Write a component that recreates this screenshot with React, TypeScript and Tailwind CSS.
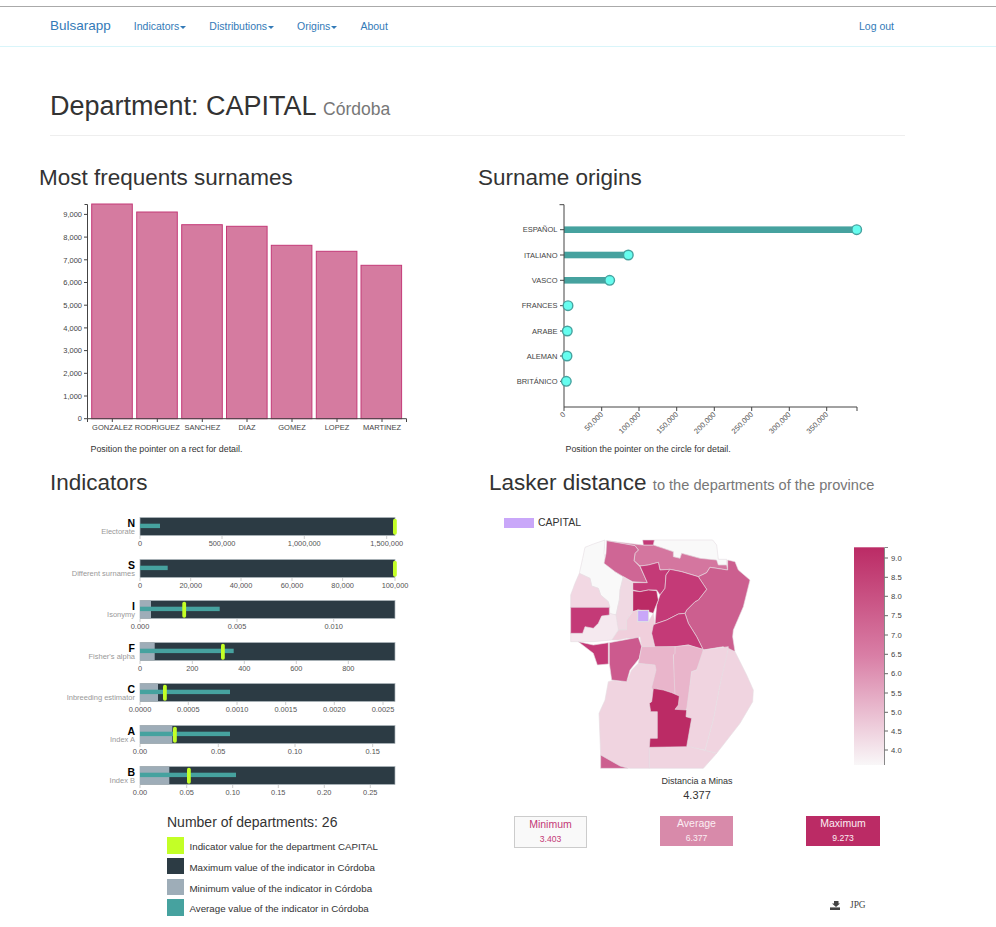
import type { ReactNode } from 'react';

const SANS = 'Liberation Sans, Arial, sans-serif';

const surnames = [
  { name: 'GONZALEZ', x: 91.7, top: 204, tick: 112.3 },
  { name: 'RODRIGUEZ', x: 136.7, top: 212, tick: 157.3 },
  { name: 'SANCHEZ', x: 181.7, top: 224.7, tick: 202.3 },
  { name: 'DIAZ', x: 226.5, top: 226.3, tick: 247 },
  { name: 'GOMEZ', x: 271.3, top: 245.3, tick: 292 },
  { name: 'LOPEZ', x: 316.3, top: 251.3, tick: 337 },
  { name: 'MARTINEZ', x: 361, top: 265.3, tick: 382 },
];

const origins = [
  { name: 'ESPAÑOL', y: 229.7, x: 856.7 },
  { name: 'ITALIANO', y: 255, x: 628.3 },
  { name: 'VASCO', y: 280.3, x: 609.7 },
  { name: 'FRANCES', y: 305.7, x: 568 },
  { name: 'ARABE', y: 331, x: 567.3 },
  { name: 'ALEMAN', y: 356, x: 567 },
  { name: 'BRITÁNICO', y: 381.3, x: 566.3 },
];

const originTicks = [
  { label: '0', x: 564 },
  { label: '50,000', x: 601.7 },
  { label: '100,000', x: 639 },
  { label: '150,000', x: 676.7 },
  { label: '200,000', x: 714.3 },
  { label: '250,000', x: 751.7 },
  { label: '300,000', x: 789.3 },
  { label: '350,000', x: 826.7 },
];

const bullets = [
  {
    letter: 'N', label: 'Electorate', min: 140, avg: 160, value: 395,
    ticks: [['0', 140], ['500,000', 222], ['1,000,000', 304.3], ['1,500,000', 386.7]],
  },
  {
    letter: 'S', label: 'Different surnames', min: 140, avg: 167.7, value: 395,
    ticks: [['0', 140], ['20,000', 190.7], ['40,000', 241], ['60,000', 292], ['80,000', 342.6], ['100,000', 395]],
  },
  {
    letter: 'I', label: 'Isonymy', min: 151, avg: 219.7, value: 184.3,
    ticks: [['0.000', 140], ['0.005', 237], ['0.010', 333.7]],
  },
  {
    letter: 'F', label: "Fisher's alpha", min: 154.7, avg: 233.7, value: 223,
    ticks: [['0', 140], ['200', 192.3], ['400', 244.3], ['600', 296.3], ['800', 348.3]],
  },
  {
    letter: 'C', label: 'Inbreeding estimator', min: 158, avg: 230, value: 165,
    ticks: [['0.0000', 140], ['0.0005', 188.3], ['0.0010', 237], ['0.0015', 285.7], ['0.0020', 334.3], ['0.0025', 383]],
  },
  {
    letter: 'A', label: 'Index A', min: 172.3, avg: 230, value: 175,
    ticks: [['0.00', 140], ['0.05', 218.3], ['0.10', 295], ['0.15', 372.7]],
  },
  {
    letter: 'B', label: 'Index B', min: 169.3, avg: 236, value: 189,
    ticks: [['0.00', 140], ['0.05', 186.7], ['0.10', 232.7], ['0.15', 278.3], ['0.20', 324.3], ['0.25', 370.3]],
  },
] as const;

const legendItems = [
  { color: 'bg-[#c3ff26]', text: 'Indicator value for the department CAPITAL' },
  { color: 'bg-[#2c3b44]', text: 'Maximum value of the indicator in Córdoba' },
  { color: 'bg-[#9eadb8]', text: 'Minimum value of the indicator in Córdoba' },
  { color: 'bg-[#46a29f]', text: 'Average value of the indicator in Córdoba' },
];

// map shapes, traced in the coordinates of a 3x crop, scaled down by the viewBox
const mapShapes = [
  { fill: '#f9f9f9', points: '135,30 100,42 75,52 68,85 58,130 90,145 95,168 115,175 122,195 145,215 150,255 168,255 178,210 180,180 190,140 165,125 140,100 132,70' },
  { fill: '#f9f9f9', points: '283,30 458,30 470,45 475,88 500,88 500,105 475,105 420,85 365,70 360,85 340,80 340,65 310,55 280,45' },
  { fill: '#d4769f', points: '140,32 248,45 280,45 310,55 340,65 340,80 360,85 365,70 420,85 470,90 475,105 500,105 503,120 470,115 450,112 440,128 415,140 365,125 330,118 300,120 295,97 265,105 240,108 222,92 225,70 235,60 225,47' },
  { fill: '#cf6695', points: '140,32 225,47 235,60 225,70 222,92 240,110 262,158 218,155 190,140 165,125 132,100 138,70' },
  { fill: '#c43a77', points: '248,30 283,30 280,45 250,45' },
  { fill: '#cc5f8f', points: '503,90 525,95 535,120 570,150 550,230 520,300 518,320 525,365 500,360 490,350 460,355 430,360 410,320 385,280 375,250 380,240 405,215 415,210 440,178 420,148 415,140 440,128 450,112 470,115 503,120' },
  { fill: '#c43a77', points: '240,108 265,105 295,97 300,120 330,118 318,135 315,175 300,195 290,180 265,180 240,185 218,180 218,158 262,158' },
  { fill: '#c43a77', points: '330,118 365,125 415,140 420,148 440,178 415,210 405,215 380,240 375,250 355,252 320,270 285,282 290,225 300,195 315,175 318,135' },
  { fill: '#bb2b65', points: '218,182 240,185 265,180 290,182 295,210 285,235 280,250 265,245 235,240 218,245' },
  { fill: '#f0d9e3', points: '190,140 218,158 218,245 200,270 200,300 175,300 160,255 168,255 178,210 180,180' },
  { fill: '#f0cfdc', points: '200,270 218,245 235,240 235,275 265,275 280,250 285,282 275,310 285,352 245,352 240,320 220,325 200,325 175,330 155,330 175,300 200,300' },
  { fill: '#c43a77', points: '285,282 320,270 355,252 375,250 385,280 410,320 430,360 385,345 350,350 285,352 275,310 280,285' },
  { fill: '#f2d8e3', points: '58,130 90,145 95,168 115,175 122,195 145,215 150,232 32,232 32,195 45,160' },
  { fill: '#f5e9ef', points: '32,305 68,305 75,285 100,290 115,275 125,253 150,250 168,255 175,300 155,330 100,335 55,335 32,335' },
  { fill: '#c43a77', points: '32,232 148,232 148,255 125,258 115,280 100,295 75,290 68,310 32,310' },
  { fill: '#c43a77', points: '55,335 100,345 145,338 145,402 112,405 100,370' },
  { fill: '#f0d4e0', points: '155,452 200,455 215,420 235,400 295,405 295,480 295,545 295,628 268,653 268,715 210,715 180,710 122,675 117,550 135,510 145,455' },
  { fill: '#cc5a8e', points: '148,338 235,322 245,350 238,385 210,420 200,455 155,450 148,400' },
  { fill: '#e9b5cb', points: '345,350 385,345 430,358 430,390 410,420 395,425 385,530 375,545 340,540 340,375' },
  { fill: '#e9b5cb', points: '245,350 315,350 345,350 345,370 340,375 345,500 310,490 280,490 275,472 288,420 285,405 235,400' },
  { fill: '#f0d4e0', points: '410,420 430,360 505,350 500,390 480,465 460,570 435,660 380,650 395,565 378,560 380,538 395,425' },
  { fill: '#f0d4e0', points: '505,355 525,365 560,435 580,480 578,515 540,580 470,670 435,662 460,570 480,465' },
  { fill: '#f0d4e0', points: '268,650 380,648 470,670 430,715 268,715' },
  { fill: '#bb2b65', points: '280,475 310,480 335,488 358,498 355,525 345,538 380,540 378,560 395,565 380,650 268,652 270,625 292,625 292,545 272,545 268,520 275,515' },
  { fill: '#cc5f8f', points: '122,675 180,708 205,715 122,715' },
];

const scaleTicks = [
  ['9.0', 558], ['8.5', 577.3], ['8.0', 596.3], ['7.5', 615.7], ['7.0', 635], ['6.5', 654.3],
  ['6.0', 673.7], ['5.5', 693], ['5.0', 712.3], ['4.5', 731], ['4.0', 750],
] as const;

function NavLink({ children, caret }: { children: ReactNode; caret?: boolean }) {
  return (
    <a className="flex items-center text-[10.5px] text-[#337ab7]">
      {children}
      {caret && <span className="ml-px mt-px h-0 w-0 border-x-[3px] border-t-[3px] border-x-transparent border-t-[#337ab7]" />}
    </a>
  );
}

function SurnamesChart() {
  const yTicks = [9000, 8000, 7000, 6000, 5000, 4000, 3000, 2000, 1000, 0];
  return (
    <svg viewBox="39 200 400 235" className="block h-[235px] w-[400px]">
      {surnames.map((s) => (
        <rect key={s.name} x={s.x} y={s.top} width={40.6} height={418.7 - s.top} fill="#d57ba0" stroke="#c43a77" strokeWidth={1} />
      ))}
      <path d="M84.5 204.5H87.5V418.7H406.5V422" fill="none" stroke="#444" strokeWidth={1} />
      <path d="M87.5 418.7V422" stroke="#444" strokeWidth={1} />
      {yTicks.map((t) => {
        const y = 418.7 - (t / 1000) * 22.7;
        return (
          <g key={t}>
            <line x1={84} x2={87.5} y1={y} y2={y} stroke="#444" />
            <text x={82} y={y + 2.7} textAnchor="end" fontSize={7.5} fill="#444">{t.toLocaleString('en-US')}</text>
          </g>
        );
      })}
      {surnames.map((s) => (
        <g key={s.name}>
          <line x1={s.tick} x2={s.tick} y1={418.7} y2={422} stroke="#444" />
          <text x={s.tick} y={429.7} textAnchor="middle" fontSize={7.5} fill="#444">{s.name}</text>
        </g>
      ))}
    </svg>
  );
}

function OriginsChart() {
  return (
    <svg viewBox="478 200 400 235" className="block h-[235px] w-[400px]">
      {origins.map((o) => (
        <rect key={o.name} x={564} y={o.y - 3.3} width={o.x - 564} height={6.6} fill="#46a29f" />
      ))}
      <path d="M559.5 204.7H564V407H857V411" fill="none" stroke="#444" strokeWidth={1} />
      {origins.map((o) => (
        <g key={o.name}>
          <line x1={560} x2={564} y1={o.y} y2={o.y} stroke="#444" />
          <text x={557.5} y={o.y + 2.7} textAnchor="end" fontSize={7.5} fill="#444">{o.name}</text>
          <circle cx={o.x} cy={o.y} r={4.8} fill="#66fdef" stroke="#46a29f" strokeWidth={1.4} />
        </g>
      ))}
      {originTicks.map((t) => (
        <g key={t.label}>
          <line x1={t.x} x2={t.x} y1={407} y2={411} stroke="#444" />
          <text transform={`translate(${t.x + 2} 415) rotate(-45)`} textAnchor="end" fontSize={7.5} fill="#555">{t.label}</text>
        </g>
      ))}
    </svg>
  );
}

function Bullet({ row }: { row: (typeof bullets)[number] }) {
  return (
    <svg viewBox="60 0 350 31" className="block h-[31px] w-[350px]">
      <rect x={140} y={0.5} width={255} height={18} fill="#2c3b44" stroke="#aeb8bd" strokeWidth={0.7} />
      {row.min > 140 && <rect x={140} y={0.8} width={row.min - 140} height={17.4} fill="#9eadb8" />}
      <rect x={140} y={6.7} width={row.avg - 140} height={4.4} fill="#46a29f" />
      <rect x={row.value - 2} y={1.7} width={3.8} height={16} rx={1.8} fill="#c3ff26" />
      <text x={135} y={9.8} textAnchor="end" fontSize={10.5} fontWeight={700} fill="#000">{row.letter}</text>
      <text x={135} y={17} textAnchor="end" fontSize={7.5} fill="#999">{row.label}</text>
      {row.ticks.map(([label, x]) => (
        <g key={label}>
          <line x1={x} x2={x} y1={19} y2={22} stroke="#ccc" />
          <text x={x} y={29.2} textAnchor="middle" fontSize={7.4} fill="#555">{label}</text>
        </g>
      ))}
    </svg>
  );
}

function DepartmentMap() {
  return (
    <svg viewBox="0 0 630 720" className="block h-[240px] w-[210px]">
      {mapShapes.map((s) => (
        <polygon key={s.points} points={s.points} fill={s.fill} stroke="#e6dde2" strokeWidth={1.8} strokeLinejoin="round" />
      ))}
      <rect x={233} y={241} width={33} height={34} fill="#c9a7f9" stroke="#e2e2e2" strokeWidth={3} />
    </svg>
  );
}

function ColorScale() {
  return (
    <svg viewBox="850 540 56 230" className="block h-[230px] w-[56px]">
      <defs>
        <linearGradient id="lasker" x1="0" x2="0" y1="0" y2="1">
          <stop offset="0" stopColor="#bb2b65" />
          <stop offset="0.5" stopColor="#d97fa6" />
          <stop offset="1" stopColor="#f9f7f8" />
        </linearGradient>
      </defs>
      <rect x={854} y={547.3} width={30.3} height={217.7} fill="url(#lasker)" />
      <path d="M888 547.5H884.5V765" fill="none" stroke="#888" strokeWidth={1} />
      {scaleTicks.map(([label, y]) => (
        <g key={label}>
          <line x1={884.5} x2={888} y1={y} y2={y} stroke="#666" />
          <text x={891} y={y + 2.7} fontSize={7.7} fill="#444">{label}</text>
        </g>
      ))}
    </svg>
  );
}

function Stat({ label, value, className }: { label: string; value: string; className: string }) {
  return (
    <div className={`flex flex-col items-center ${className}`}>
      <span className="text-[10.5px] leading-[15px]">{label}</span>
      <span className="text-[8.6px] leading-[15px]">{value}</span>
    </div>
  );
}

export default function App() {
  return (
    <div className="w-[996px] bg-white pt-[6px] text-[#333]" style={{ fontFamily: SANS }}>
      <nav className="flex h-[41px] items-center justify-between border-y border-t-[#aaaaaa] border-b-[#d9f5fa] pl-[50px] pr-[102px]">
        <div className="flex items-center gap-[23px]">
          <a className="text-[13.5px] text-[#337ab7]">Bulsarapp</a>
          <NavLink caret>Indicators</NavLink>
          <NavLink caret>Distributions</NavLink>
          <NavLink caret>Origins</NavLink>
          <NavLink>About</NavLink>
        </div>
        <NavLink>Log out</NavLink>
      </nav>

      <header className="ml-[50px] mt-[42px] h-[47px] w-[855px] border-b border-[#eeeeee]">
        <h1 className="text-[27px] leading-[34px]">
          Department: CAPITAL <small className="text-[17.5px] text-[#777777]">Córdoba</small>
        </h1>
      </header>

      <section className="mt-[28px] grid grid-cols-[439px_1fr] pl-[39px]">
        <div>
          <h2 className="h-[27px] text-[22.5px] leading-[27px]">Most frequents surnames</h2>
          <div className="mt-[9px]">
            <SurnamesChart />
          </div>
          <p className="mt-[9px] pl-[51.5px] text-[8.9px] leading-[11px]">Position the pointer on a rect for detail.</p>
        </div>
        <div>
          <h2 className="h-[27px] text-[22.5px] leading-[27px]">Surname origins</h2>
          <div className="mt-[9px]">
            <OriginsChart />
          </div>
          <p className="mt-[9px] pl-[87.5px] text-[8.9px] leading-[11px]">Position the pointer on the circle for detail.</p>
        </div>
      </section>

      <section className="mt-[14px] grid grid-cols-[439px_1fr] pl-[50px]">
        <div>
          <h2 className="h-[27px] text-[22.5px] leading-[27px]">Indicators</h2>
          <div className="ml-[10px] mt-[21px] flex flex-col gap-[10.5px]">
            {bullets.map((row) => (
              <Bullet key={row.letter} row={row} />
            ))}
          </div>
          <div className="ml-[117px] mt-[17px]">
            <p className="text-[14px] leading-[16px]">Number of departments: 26</p>
            <ul className="mt-[7px] flex flex-col gap-[4.3px]">
              {legendItems.map((item) => (
                <li key={item.text} className="flex h-[16.5px] items-start gap-[6px] text-[9.75px]">
                  <span className={`h-[16.5px] w-[16.5px] ${item.color}`} />
                  <span className="pt-[4px] leading-[12.5px]">{item.text}</span>
                </li>
              ))}
            </ul>
          </div>
        </div>

        <div>
          <h2 className="h-[27px] text-[22.5px] leading-[27px]">
            Lasker distance <small className="text-[14.6px] text-[#777777]">to the departments of the province</small>
          </h2>
          <div className="ml-[15px] mt-[21px] flex h-[12px] items-center gap-[4px] text-[10.5px]">
            <span className="h-[10px] w-[30px] bg-[#c9a7f9]" />
            CAPITAL
          </div>
          <div className="relative ml-[71px] mt-[1px] flex h-[240px] items-start">
            <DepartmentMap />
            <div className="ml-[80px] mt-[10px]">
              <ColorScale />
            </div>
          </div>
          <div className="ml-[158px] mt-[5.5px] w-[100px] text-center">
            <p className="text-[9px] leading-[11px]">Distancia a Minas</p>
            <p className="mt-[1.5px] text-[11px] leading-[14px]">4.377</p>
          </div>
          <div className="ml-[25px] mt-[14px] flex items-start gap-[73px]">
            <Stat label="Minimum" value="3.403" className="h-[32px] w-[73px] border border-[#cccccc] bg-[#f9f9f9] text-[#c43a77]" />
            <Stat label="Average" value="6.377" className="h-[30px] w-[73px] bg-[#d88aaa] text-[#fbeef3]" />
            <Stat label="Maximum" value="9.273" className="h-[30px] w-[74px] bg-[#bb2b65] text-[#fbeef3]" />
          </div>
          <div className="ml-[340.5px] mt-[50px] flex items-center gap-[10.5px] text-[#444]">
            <svg viewBox="0 0 10 9" className="h-[9px] w-[10px]">
              <path d="M4 0H8.5V2.6H10L6 6 2 2.6H4Z" fill="#444" />
              <path d="M0 6.4H10V9H0Z" fill="#444" />
            </svg>
            <span className="text-[9.4px]" style={{ fontFamily: 'Liberation Serif, serif' }}>JPG</span>
          </div>
        </div>
      </section>
    </div>
  );
}
